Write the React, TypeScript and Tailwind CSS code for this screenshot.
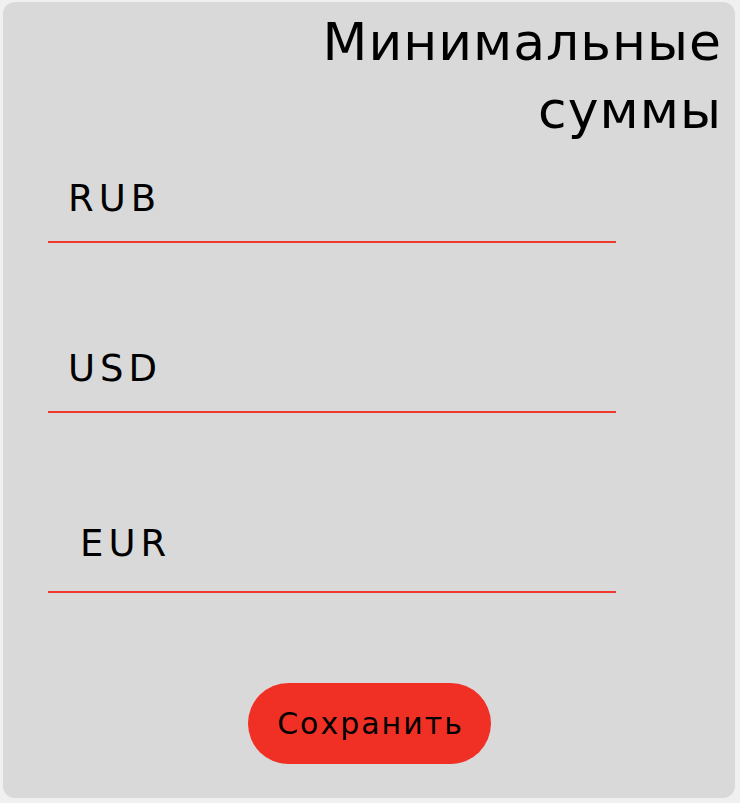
export default function App() {
  const fields = [
    { label: "RUB", pad: "pl-[20px]", h: "h-[87px]", mt: "" },
    { label: "USD", pad: "pl-[20px]", h: "h-[87px]", mt: "mt-[83px]" },
    { label: "EUR", pad: "pl-[32px]", h: "h-[97px]", mt: "mt-[83px]" },
  ];
  return (
    <div className="w-[740px] h-[803px] bg-[#f0f0f0] pt-[2px] pl-[3px] font-['DejaVu_Sans',sans-serif]">
      <div className="w-[732px] h-[796px] bg-[#d9d9d9] rounded-[12px] flex flex-col">
        <h1 className="text-right pr-[13px] pt-[6px] text-[52px] leading-[68px] font-normal text-black tracking-[1px]">
          Минимальные<br />суммы
        </h1>
        <div className="flex flex-col pl-[45px] mt-[12px]">
          {fields.map((f) => (
            <div key={f.label} className={"w-[568px] flex flex-col " + f.h + " " + f.mt}>
              <div className={"flex-1 flex items-center " + f.pad}>
                <span className="text-[37px] text-black leading-none tracking-[5px]">{f.label}</span>
              </div>
              <div className="h-[2px] bg-[#ef3a2d]" />
            </div>
          ))}
        </div>
        <div className="flex justify-center mt-[90px]">
          <button className="w-[243px] h-[81px] rounded-full bg-[#f03024] text-black text-[30px] tracking-[2px] pl-[3px]">
            Сохранить
          </button>
        </div>
      </div>
    </div>
  );
}
